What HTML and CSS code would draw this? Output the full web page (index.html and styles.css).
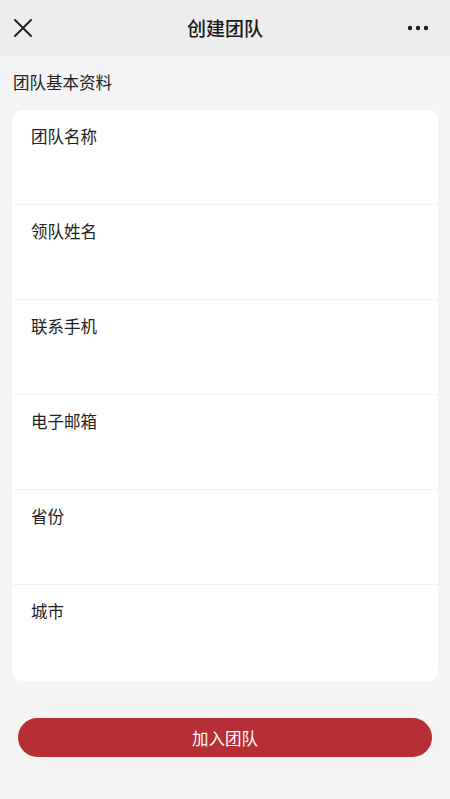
FILE: index.html
```html
<!DOCTYPE html>
<html lang="zh">
<head>
<meta charset="utf-8">
<link rel="stylesheet" href="styles.css">
</head>
<body>
<div class="page">
  <header class="nav">
    <svg class="nav-close" width="18" height="18" viewBox="0 0 18 18"><path d="M1 1 L17 17 M17 1 L1 17" stroke="#1a1a1a" stroke-width="1.8" fill="none" stroke-linecap="round"/></svg>
    <div class="nav-title">创建团队</div>
    <svg class="nav-more" width="22" height="6" viewBox="0 0 22 6"><circle cx="3" cy="3" r="2.2" fill="#1a1a1a"/><circle cx="11" cy="3" r="2.2" fill="#1a1a1a"/><circle cx="19" cy="3" r="2.2" fill="#1a1a1a"/></svg>
  </header>
  <div class="section-title">团队基本资料</div>
  <div class="card">
    <div class="row"><span class="label">团队名称</span></div>
    <div class="row"><span class="label">领队姓名</span></div>
    <div class="row"><span class="label">联系手机</span></div>
    <div class="row"><span class="label">电子邮箱</span></div>
    <div class="row"><span class="label">省份</span></div>
    <div class="row"><span class="label">城市</span></div>
  </div>
  <div class="actions">
    <button class="btn">加入团队</button>
  </div>
</div>
</body>
</html>
```
FILE: styles.css
```css
* { box-sizing: border-box; }
html, body { margin: 0; padding: 0; }
body {
  background: #f4f4f4;
  font-family: "Noto Sans CJK SC", "Noto Sans", sans-serif;
  color: #1a1a1a;
  width: 450px;
  height: 799px;
  overflow: hidden;
}
.page { display: flex; flex-direction: column; }
.nav {
  height: 56px;
  background: #ededed;
  display: flex;
  align-items: center;
  justify-content: space-between;
  padding: 0 21px 0 14px;
  position: relative;
}
.nav-title {
  position: absolute;
  left: 0; right: 0;
  text-align: center;
  font-size: 19px;
  font-weight: 500;
  line-height: 56px;
  pointer-events: none;
}
.nav-close { display: block; }
.nav-more { display: block; }
.section-title {
  font-size: 16.5px;
  line-height: 22px;
  padding: 15px 13px 0;
  color: #222;
}
.card {
  margin: 17px 12px 0 12px;
  background: #fff;
  border-radius: 10px;
  overflow: hidden;
}
.row {
  height: 95px;
  padding: 14px 19px 0;
  border-bottom: 1px solid #f3f3f3;
}
.row:last-child { border-bottom: none; height: 96px; }
.label {
  font-size: 16.5px;
  line-height: 22px;
  color: #222;
}
.actions {
  padding: 37px 18px 0;
}
.btn {
  width: 100%;
  height: 39px;
  border: none;
  border-radius: 20px;
  background: #b72e34;
  color: #fff;
  font-family: "Noto Sans CJK SC", "Noto Sans", sans-serif;
  font-size: 16.5px;
  padding: 0;
}
```
